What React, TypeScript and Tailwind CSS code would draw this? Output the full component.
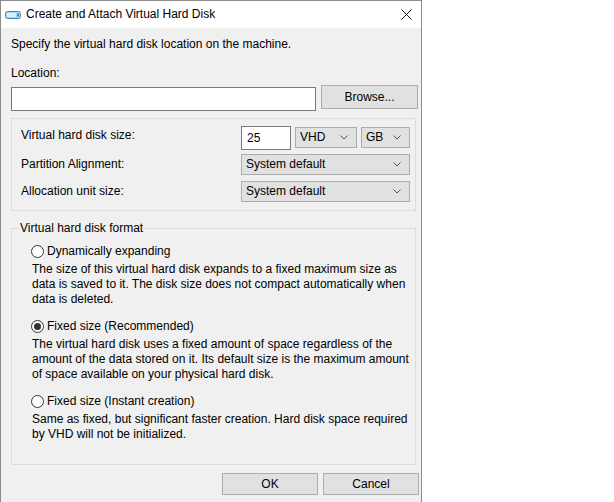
import React from "react";

const Chevron = () => (
  <svg width="8" height="5" viewBox="0 0 8 5" className="shrink-0">
    <polyline points="0.5,0.5 4,4 7.5,0.5" fill="none" stroke="#555" strokeWidth="1" />
  </svg>
);

const Select = ({ text, w }: { text: string; w: string }) => (
  <div className={`${w} h-[21px] bg-[#e1e1e1] border border-[#acacac] flex items-center justify-between pl-[4px] pr-[8px]`}>
    <span className="leading-[15px]">{text}</span>
    <Chevron />
  </div>
);

const Radio = ({ checked, label }: { checked?: boolean; label: string }) => (
  <div className="h-[17px] flex items-center">
    <div className="w-[13px] h-[13px] rounded-full border border-[#333] bg-white flex items-center justify-center">
      {checked && <div className="w-[7px] h-[7px] rounded-full bg-[#333]" />}
    </div>
    <span className="ml-[3px] leading-[15px]">{label}</span>
  </div>
);

const Desc = ({ lines }: { lines: string[] }) => (
  <div className="mt-[2px] pl-[1px] leading-[15px]">
    {lines.map((l, i) => (
      <div key={i}>{l}</div>
    ))}
  </div>
);

export default function App() {
  return (
    <div
      className="w-[614px] h-[502px] bg-white flex text-[12px] text-black"
      style={{ fontFamily: '"Liberation Sans", Arial, sans-serif' }}
    >
      <div className="w-[422px] h-[502px] border-l border-r border-t border-[#8c8c8c] flex flex-col bg-[#f0f0f0]">
        {/* title bar */}
        <div className="h-[27px] bg-white flex items-center shrink-0">
          <svg width="16" height="8" viewBox="0 0 16 8" className="ml-[4px]">
            <rect x="0.5" y="0.5" width="15" height="7" rx="2" fill="#a9d6f0" stroke="#4b86ad" />
            <rect x="2" y="2" width="9" height="4" rx="1" fill="#d8eefa" />
            <rect x="12" y="2.5" width="2" height="3" fill="#4b86ad" />
          </svg>
          <span className="ml-[5px] leading-[15px]">Create and Attach Virtual Hard Disk</span>
          <div className="ml-auto mr-[9px] w-[11px] h-[11px]">
            <svg width="11" height="11" viewBox="0 0 11 11">
              <path d="M0.5 0.5 L10.5 10.5 M10.5 0.5 L0.5 10.5" stroke="#111" strokeWidth="1" />
            </svg>
          </div>
        </div>
        {/* body */}
        <div className="flex flex-col pl-[10px] pr-[2px] pt-[9px]">
          <div className="leading-[15px]">Specify the virtual hard disk location on the machine.</div>
          <div className="leading-[15px] mt-[14px]">Location:</div>
          <div className="flex mt-[4px] gap-[5px] items-start">
            <div className="w-[305px] h-[24px] mt-[2px] bg-white border border-[#7a7a7a]" />
            <div className="w-[97px] h-[24px] bg-[#e1e1e1] border border-[#adadad] flex items-center justify-center leading-[15px]">
              Browse...
            </div>
          </div>
          {/* group 1 */}
          <div className="w-[405px] mt-[7px] border border-[#dcdcdc] pt-[7px] pb-[8px] flex flex-col">
            <div className="flex items-start h-[24px]">
              <div className="w-[229px] pl-[9px] pt-[2px] leading-[15px]">Virtual hard disk size:</div>
              <div className="w-[50px] h-[24px] bg-white border border-[#7a7a7a] flex items-center pl-[5px] leading-[15px]">25</div>
              <div className="ml-[4px] mt-[1px]">
                <Select text="VHD" w="w-[62px]" />
              </div>
              <div className="ml-[4px] mt-[1px]">
                <Select text="GB" w="w-[49px]" />
              </div>
            </div>
            <div className="flex items-center mt-[4px]">
              <div className="w-[229px] pl-[9px] leading-[15px]">Partition Alignment:</div>
              <Select text="System default" w="w-[169px]" />
            </div>
            <div className="flex items-center mt-[6px]">
              <div className="w-[229px] pl-[9px] leading-[15px]">Allocation unit size:</div>
              <Select text="System default" w="w-[169px]" />
            </div>
          </div>
          {/* group 2 */}
          <fieldset className="w-[405px] mt-[10px] border border-[#dcdcdc] p-0 m-0 min-w-0">
            <legend className="ml-[7px] px-[1px] leading-[15px]">Virtual hard disk format</legend>
            <div className="pl-[19px] pt-[7px] pb-[22px] flex flex-col">
              <Radio label="Dynamically expanding" />
              <Desc
                lines={[
                  "The size of this virtual hard disk expands to a fixed maximum size as",
                  "data is saved to it. The disk size does not compact automatically when",
                  "data is deleted.",
                ]}
              />
              <div className="mt-[11px]">
                <Radio checked label="Fixed size (Recommended)" />
              </div>
              <Desc
                lines={[
                  "The virtual hard disk uses a fixed amount of space regardless of the",
                  "amount of the data stored on it. Its default size is the maximum amount",
                  "of space available on your physical hard disk.",
                ]}
              />
              <div className="mt-[11px]">
                <Radio label="Fixed size (Instant creation)" />
              </div>
              <Desc
                lines={[
                  "Same as fixed, but significant faster creation. Hard disk space required",
                  "by VHD will not be initialized.",
                ]}
              />
            </div>
          </fieldset>
          <div className="flex justify-end gap-[5px] mt-[8px]">
            <div className="w-[96px] h-[22px] bg-[#e1e1e1] border border-[#adadad] flex items-center justify-center leading-[15px]">OK</div>
            <div className="w-[96px] h-[22px] bg-[#e1e1e1] border border-[#adadad] flex items-center justify-center leading-[15px]">Cancel</div>
          </div>
        </div>
      </div>
    </div>
  );
}
